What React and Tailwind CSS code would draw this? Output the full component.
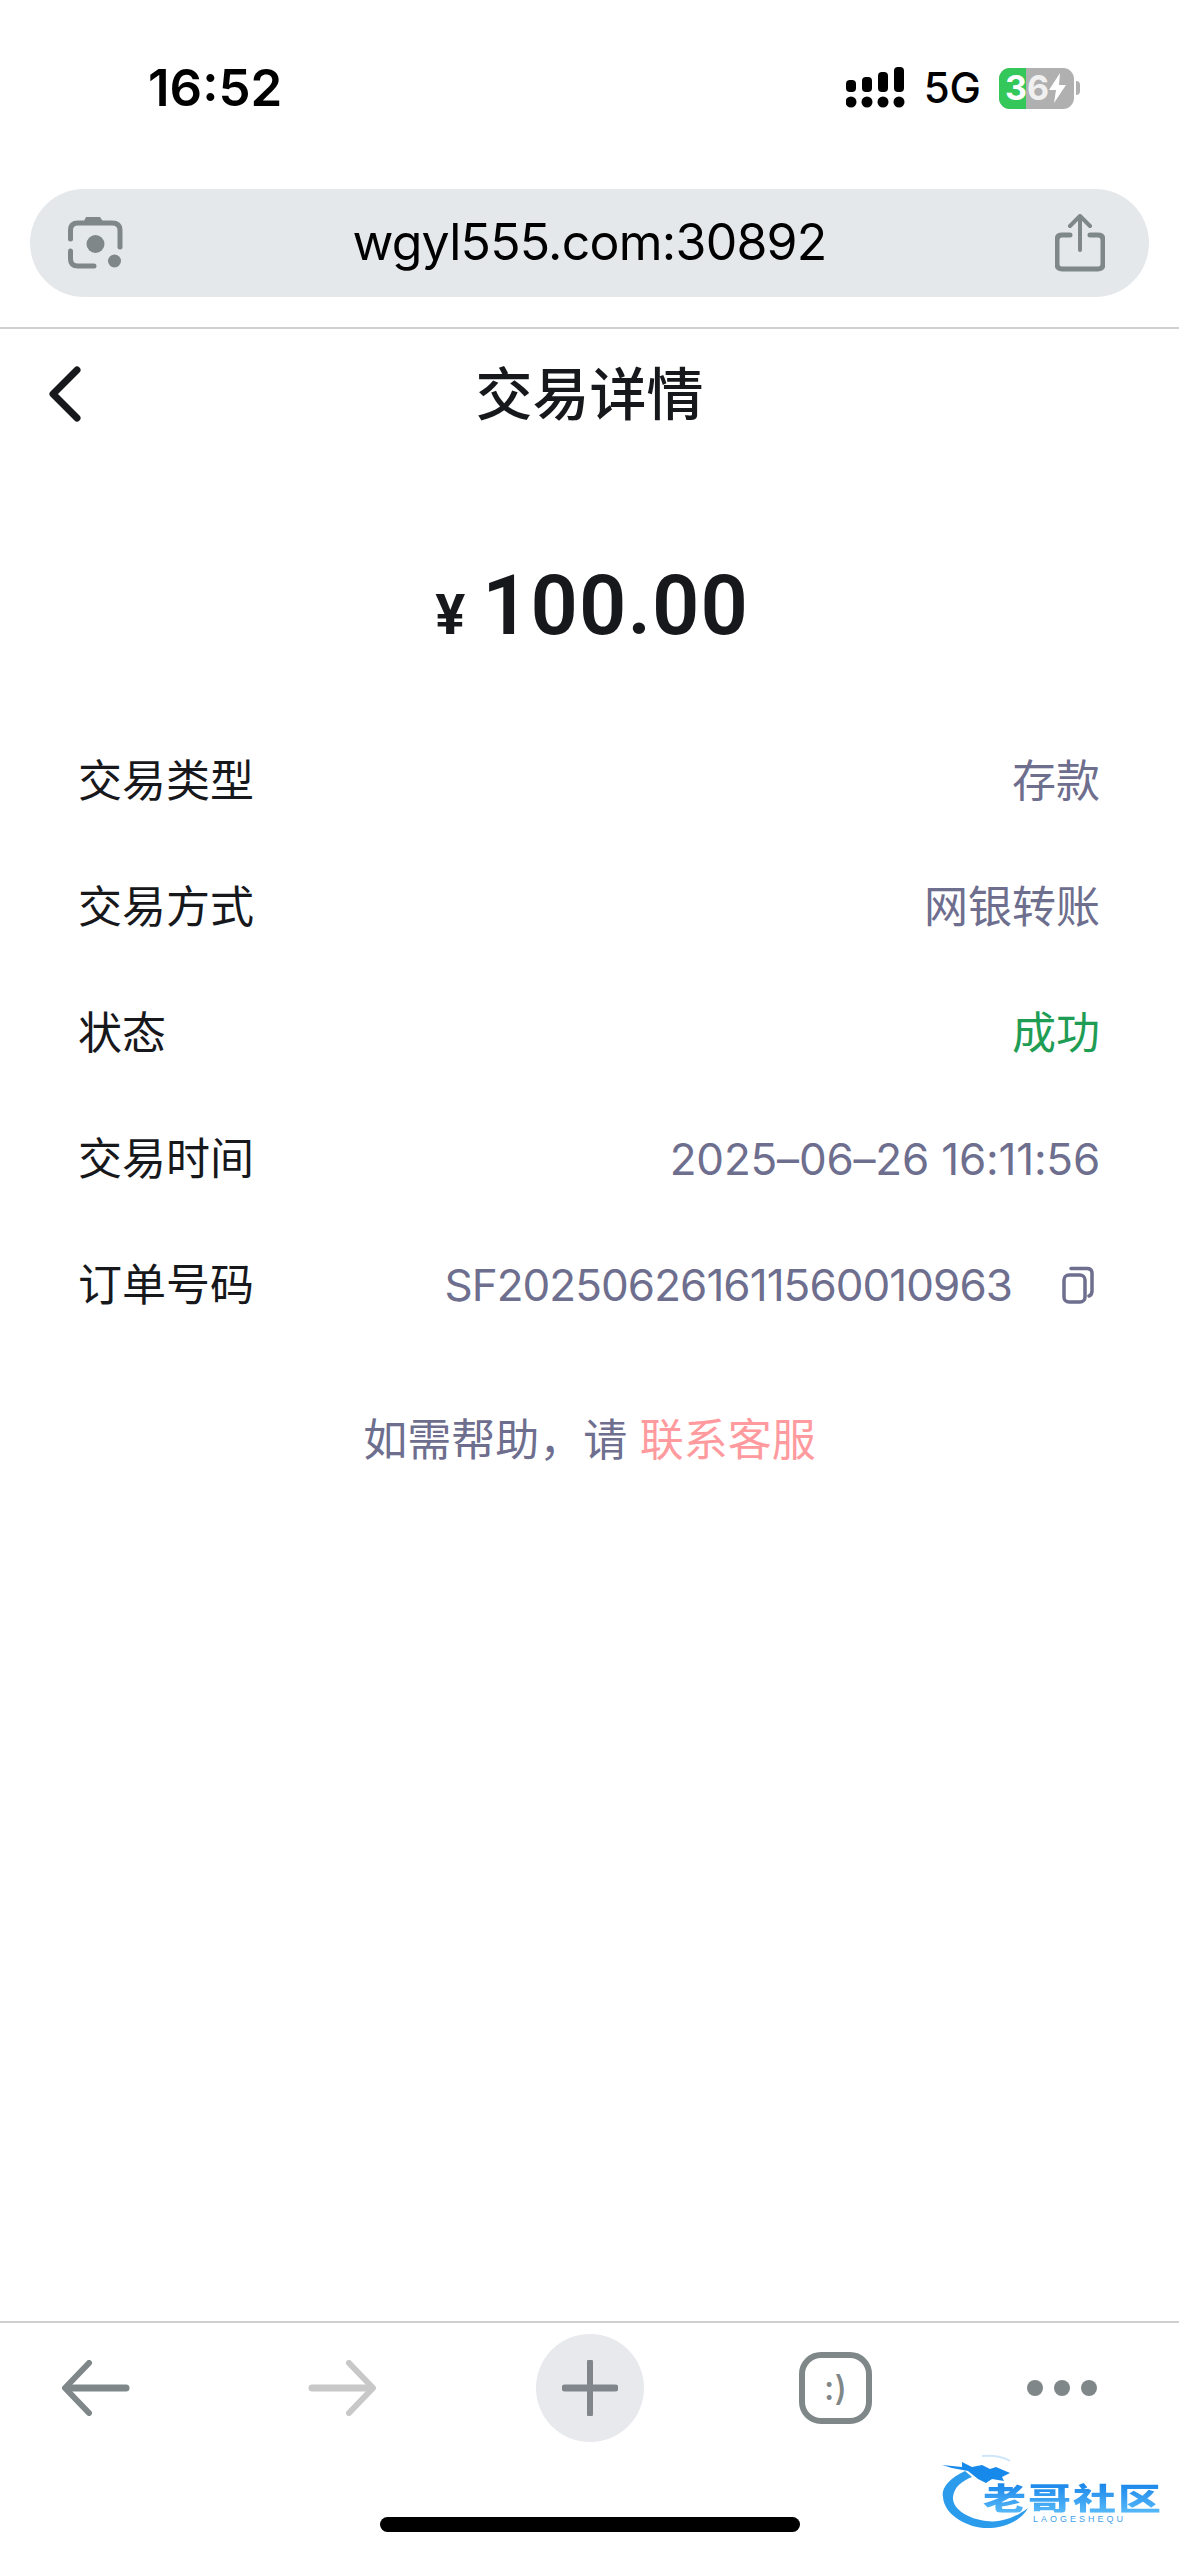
import React from "react";

const FONT = "font-['Inter','Noto_Sans_CJK_SC',sans-serif]";

const rows = [
  { label: "交易类型", value: "存款" },
  { label: "交易方式", value: "网银转账" },
  { label: "状态", value: "成功", color: "text-[#1f9d55]" },
  { label: "交易时间", value: "2025–06–26 16:11:56", tight: "tracking-[-0.2px]" },
];

function Signal() {
  return (
    <svg width="60" height="42" viewBox="0 0 60 42" fill="#000">
      <rect x="0" y="13" width="10" height="12" rx="4" />
      <rect x="16" y="10" width="10" height="15" rx="4" />
      <rect x="32" y="5" width="10" height="20" rx="4" />
      <rect x="48" y="0" width="10" height="25" rx="4" />
      <circle cx="5" cy="35" r="5.5" />
      <circle cx="21" cy="35" r="5.5" />
      <circle cx="37" cy="35" r="5.5" />
      <circle cx="53" cy="35" r="5.5" />
    </svg>
  );
}

function Battery() {
  return (
    <div className="flex items-center">
      <div className="relative w-[75px] h-[41px] rounded-[11px] overflow-hidden bg-[#b0b0b0]">
        <div className="absolute left-0 top-0 h-full w-[27px] bg-[#34c759]" />
        <div className="absolute inset-0 flex items-center pl-[6px] text-[34px] font-bold leading-none text-white">
          <span>3</span>
          <span className="text-[#f0f0f0]">6</span>
          <svg width="18" height="30" viewBox="0 0 18 30" fill="#fff">
            <path d="M11 0 L0 17 H7 L5 30 L17 12 H10 Z" />
          </svg>
        </div>
      </div>
      <div className="w-[4px] h-[14px] ml-[2px] rounded-r-full bg-[#b0b0b0]" />
    </div>
  );
}

function LensIcon() {
  return (
    <svg width="56" height="56" viewBox="0 0 56 56" fill="none" stroke="#7f8789" strokeWidth="5" strokeLinecap="round">
      <path d="M15 8 L18 2 H32 L36 8 Z" fill="#7f8789" stroke="none" />
      <path d="M2.500 24 V15 Q2.500 8 10 8 H44 Q52 8 52 15 V32" />
      <path d="M2.500 36 V44 Q2.500 51 10 51 H26" />
      <circle cx="27.500" cy="29" r="9" fill="#7f8789" stroke="none" />
      <circle cx="46.500" cy="46" r="6.500" fill="#7f8789" stroke="none" />
    </svg>
  );
}

function ShareIcon() {
  return (
    <svg width="50" height="58" viewBox="0 0 50 58" fill="none" stroke="#7f8789" strokeWidth="4" strokeLinecap="round" strokeLinejoin="round">
      <path d="M15 21 H7 Q2 21 2 26 V50 Q2 55 7 55 H43 Q48 55 48 50 V26 Q48 21 43 21 H35" strokeWidth="5" />
      <path d="M25 36 V3 M15 12 L25 2 L35 12" />
    </svg>
  );
}

function CopyIcon() {
  return (
    <svg width="32" height="38" viewBox="0 0 32 38" fill="none" stroke="#6e6e8e" strokeWidth="3.500" strokeLinecap="round">
      <rect x="2" y="9" width="21" height="27" rx="5" />
      <path d="M9 2.500 H25 Q30 2.500 30 7.500 V25 Q30 29 27 30" />
    </svg>
  );
}

function ArrowIcon({ color, flip }) {
  return (
    <svg width="68" height="56" viewBox="0 0 68 56" fill="none" stroke={color} strokeLinecap="round" strokeLinejoin="round" className={flip ? "-scale-x-100" : ""}>
      <path d="M27 3 L3 28 L27 53" strokeWidth="6" />
      <path d="M7 28 H64" strokeWidth="7" />
    </svg>
  );
}

function TabsIcon() {
  return (
    <div className={`w-[73px] h-[72px] rounded-[22px] border-[6px] border-[#7f8789] flex items-center justify-center text-[34px] font-medium leading-none text-[#7f8789] ${FONT}`}>
      :)
    </div>
  );
}

function Logo() {
  return (
    <div className="absolute left-[938px] top-[2453px] w-[232px] h-[80px]">
      <svg width="120" height="80" viewBox="0 0 120 80" fill="none" className="absolute left-0 top-0 blur-[0.6px]">
        <path d="M27 18 C10 26 3 36 5 44 C6 62 30 76 52 75 C70 74 84 66 90 55 C78 64 64 70 48 68 C30 66 14 56 15 44 C16 34 24 28 34 24 Z" fill="#2b9cec" />
        <path d="M4 12 L24 14 L24 9 L34 14 L44 12 L52 16 L58 14 L72 20 L64 24 L66 28 L54 26 L48 30 L40 26 L30 18 L14 15 Z" fill="#1689ea" />
        <path d="M44 3 Q62 2 72 8" stroke="#cfe6fa" strokeWidth="2" />
      </svg>
      <div className="absolute left-[45px] top-[20px] h-[46px] text-[43px] leading-[46px] font-black tracking-[2px] whitespace-nowrap scale-y-[0.72] blur-[0.4px] bg-gradient-to-b from-[#0a7fe8] to-[#55b8f8] bg-clip-text text-transparent font-['Noto_Sans_CJK_SC',sans-serif]">
        老哥社区
      </div>
      <div className="absolute left-[95px] top-[62px] h-[9px] text-[9px] leading-[9px] tracking-[3px] text-[#3f9fe8] font-['Liberation_Sans',sans-serif] whitespace-nowrap">
        LAOGESHEQU
      </div>
    </div>
  );
}

export default function App() {
  return (
    <div className={`relative w-[1179px] h-[2556px] bg-white flex flex-col overflow-hidden ${FONT}`}>
      {/* status bar */}
      <div className="h-[189px] flex justify-between items-start pt-[59px] pl-[148px] pr-[99px]">
        <div className="text-[51px] leading-[58px] font-semibold text-black">16:52</div>
        <div className="flex items-center gap-[18px] pt-[8px]">
          <Signal />
          <div className="text-[42px] leading-none font-medium text-black">5G</div>
          <Battery />
        </div>
      </div>

      {/* address bar */}
      <div className="mx-[30px] h-[108px] rounded-[54px] bg-[#e5e8eb] flex items-center justify-between pl-[38px] pr-[44px]">
        <LensIcon />
        <div className="text-[50px] leading-none tracking-[-0.75px] text-black pb-[2px]">wgyl555.com:30892</div>
        <ShareIcon />
      </div>

      <div className="mt-[30px] h-[2px] bg-[#d0d0d0]" />

      {/* page header */}
      <div className="relative h-[130px] flex items-center justify-center">
        <svg width="36" height="56" viewBox="0 0 36 56" fill="none" stroke="#17181c" strokeWidth="7" strokeLinecap="round" strokeLinejoin="round" className="absolute left-[48px] top-[37px]">
          <path d="M29 4 L5 28 L29 52" />
        </svg>
        <div className="text-[57px] leading-none font-medium text-[#17181c]">交易详情</div>
      </div>

      {/* amount */}
      <div className="mt-[103px] pl-[5px] flex items-baseline justify-center text-[#17181c] font-['Roboto','Inter',sans-serif] font-semibold">
        <span className="text-[56px] leading-none mr-[17px] font-bold">¥</span>
        <span className="text-[83px] leading-[88px] tracking-[1px]">100.00</span>
      </div>

      {/* details */}
      <div className="mt-[68px] pl-[78px] pr-[79px] flex flex-col text-[44px]">
        {rows.map((r) => (
          <div key={r.label} className="h-[126px] flex items-center justify-between">
            <span className="text-[#17181c]">{r.label}</span>
            <span className={`${r.color || "text-[#6e6e8e]"} ${r.tight || ""}`}>{r.value}</span>
          </div>
        ))}
        <div className="h-[126px] flex items-center justify-between">
          <span className="text-[#17181c]">订单号码</span>
          <div className="flex items-center gap-[50px] pr-[6px] text-[#6e6e8e]">
            <span className="tracking-[-0.95px]">SF202506261611560010963</span>
            <CopyIcon />
          </div>
        </div>
      </div>

      {/* help */}
      <div className="mt-[62px] text-center text-[44px] leading-[60px] text-[#6e6e8e]">
        如需帮助，请 <span className="text-[#ff9a9e]">联系客服</span>
      </div>

      {/* bottom toolbar */}
      <div className="mt-auto h-[235px] border-t-2 border-[#d0d0d0] flex flex-col">
        <div className="relative h-[130px] flex items-center justify-center">
          <div className="absolute left-[62px] top-[37px]"><ArrowIcon color="#7f8789" /></div>
          <div className="absolute left-[308px] top-[37px]"><ArrowIcon color="#c8c8c8" flip /></div>
          <div className="w-[108px] h-[108px] rounded-full bg-[#e8e9ed] flex items-center justify-center">
            <svg width="56" height="56" viewBox="0 0 56 56" fill="none" stroke="#80868c" strokeLinecap="round">
              <path d="M28 2 V54" strokeWidth="6" />
              <path d="M3 28 H53" strokeWidth="7" />
            </svg>
          </div>
          <div className="absolute left-[799px] top-[29px]"><TabsIcon /></div>
          <div className="absolute left-[1027px] top-[57px] flex gap-[11px]">
            <div className="w-[16px] h-[16px] rounded-full bg-[#7f8789]" />
            <div className="w-[16px] h-[16px] rounded-full bg-[#7f8789]" />
            <div className="w-[16px] h-[16px] rounded-full bg-[#7f8789]" />
          </div>
        </div>
        <div className="mt-[64px] mx-auto w-[420px] h-[15px] rounded-full bg-black" />
      </div>

      <Logo />
    </div>
  );
}
